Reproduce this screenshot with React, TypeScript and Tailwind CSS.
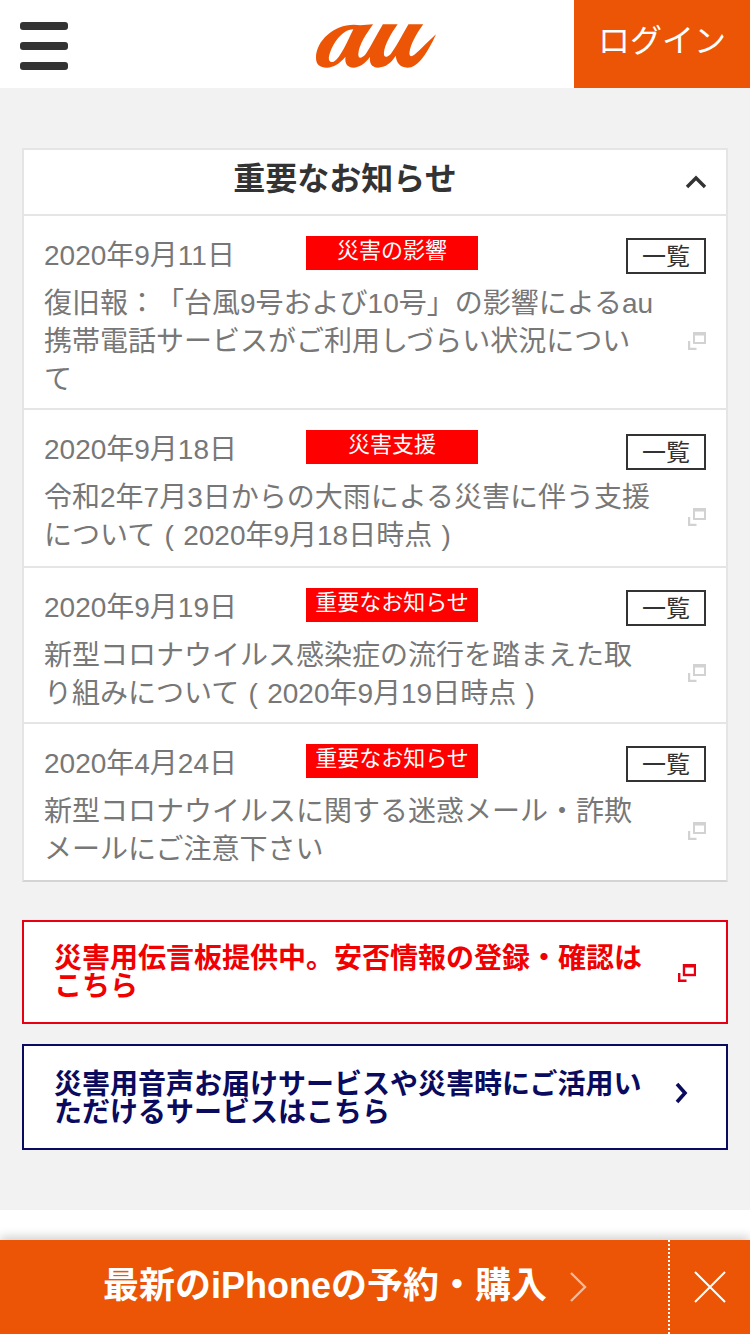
import React from "react";

const FONT = "font-['Liberation_Sans','Noto_Sans_CJK_JP',sans-serif]";

function ExtIcon({ color, weight }: { color: string; weight: number }) {
  return (
    <svg width="18" height="18" viewBox="0 0 18 18" fill="none" className="shrink-0">
      <rect x="6" y="1" width="11" height="10" fill="none" stroke={color} strokeWidth={weight} />
      <rect x="5" y="0" width="13" height="3.5" fill={color} />
      <path d="M1 9v8h7.5" stroke={color} strokeWidth={weight + 0.4} />
    </svg>
  );
}

function Paren({ c }: { c: string }) {
  return <span className="inline-block w-[28px] text-center">{c}</span>;
}

const items = [
  {
    date: "2020年9月11日",
    tag: "災害の影響",
    lines: [<>復旧報：「台風9号および10号」の影響によるau</>, <>携帯電話サービスがご利用しづらい状況につい</>, <>て</>],
    chipMt: "mt-[2px]",
    pb: "pb-[9px]",
    iconMb: "mb-[2px]",
  },
  {
    date: "2020年9月18日",
    tag: "災害支援",
    lines: [
      <>令和2年7月3日からの大雨による災害に伴う支援</>,
      <>
        について<Paren c="(" />2020年9月18日時点<Paren c=")" />
      </>,
    ],
    chipMt: "mt-[4px]",
    pb: "pb-[11px]",
    iconMb: "mb-0",
  },
  {
    date: "2020年9月19日",
    tag: "重要なお知らせ",
    lines: [
      <>新型コロナウイルス感染症の流行を踏まえた取</>,
      <>
        り組みについて<Paren c="(" />2020年9月19日時点<Paren c=")" />
      </>,
    ],
    chipMt: "mt-[2px]",
    pb: "pb-[9px]",
    iconMb: "mb-[4px]",
  },
  {
    date: "2020年4月24日",
    tag: "重要なお知らせ",
    lines: [<>新型コロナウイルスに関する迷惑メール・詐欺</>, <>メールにご注意下さい</>],
    chipMt: "mt-[2px]",
    pb: "pb-[11px]",
    iconMb: "mb-0",
  },
];

export default function App() {
  return (
    <div className={`${FONT} [text-spacing-trim:space-all] w-[750px] h-[1334px] overflow-hidden bg-[#f2f2f2] flex flex-col`}>
      <header className="h-[88px] bg-white flex items-stretch shrink-0">
        <div className="w-[314px] pl-[20px] pt-[22px] flex flex-col gap-[12px]">
          <div className="w-[48px] h-[8px] rounded-[3px] bg-[#333]" />
          <div className="w-[48px] h-[8px] rounded-[3px] bg-[#333]" />
          <div className="w-[48px] h-[8px] rounded-[3px] bg-[#333]" />
        </div>
        <div className="flex-1 pt-[24px]">
          <svg width="120" height="45" viewBox="0 0 122 45" className="ml-[2px]">
            <path
              fillRule="evenodd"
              fill="#eb5505"
              d="M45 1C22 -3 0 15 0 34C0 41 4 44 11 44C18 44 24 40 30 33C29 40 32 44 38 44C44 44 50 40 55 33C54 40 57 44 63 44C70 44 76 40 81 32C82 40 86 44 93 44C103 44 112 32 122 10C115 16 107 25 100 31C97 33 95 33 95 29C96 20 102 10 109 0H94C87 12 81 24 76 30C72 34 69 34 69 29C70 20 76 10 83 0H68C61 12 55 24 50 31C46 35 43 35 43 30C44 20 51 10 58 0ZM38 5C26 5 15 22 13 34C13 38 15 39 18 38C25 34 32 17 38 5Z"
            />
          </svg>
        </div>
        <div className="w-[176px] bg-[#eb5505] text-white text-[32px] leading-[82px] text-center">ログイン</div>
      </header>

      <section className="mt-[60px] mx-[22px] border-2 border-[#e5e5e5] border-b-[#d4d4d4] bg-white shrink-0">
        <div className="h-[64px] relative">
          <div className="w-[642px] text-center text-[32px] font-bold text-[#333] leading-[58px]">重要なお知らせ</div>
          <svg width="24" height="16" viewBox="0 0 24 16" className="absolute right-[18px] top-[24px]" fill="none">
            <path d="M3 13L12 4L21 13" stroke="#333" strokeWidth="3.4" />
          </svg>
        </div>
        {items.map((it, i) => (
          <div key={i} className={`border-t-2 border-[#e5e5e5] pl-[20px] pr-[20px] pt-[20px] ${it.pb}`}>
            <div className="h-[49px] flex items-start">
              <div className="w-[262px] text-[28px] leading-[39px] text-[#777]">{it.date}</div>
              <div className="w-[172px] h-[34px] bg-[#ff0000] text-white text-[22px] leading-[30px] text-center">{it.tag}</div>
              <div className={`ml-auto ${it.chipMt} w-[80px] h-[36px] border-2 border-[#333] text-[#333] bg-white text-[24px] leading-[34px] text-center`}>
                一覧
              </div>
            </div>
            <div className="flex items-center justify-between">
              <div className="text-[28px] leading-[38px] text-[#777] whitespace-nowrap">
                {it.lines.map((l, j) => (
                  <div key={j}>{l}</div>
                ))}
              </div>
              <div className={it.iconMb}>
                <ExtIcon color="#d2d2d2" weight={2} />
              </div>
            </div>
          </div>
        ))}
      </section>

      <div className="mt-[38px] mx-[22px] h-[104px] border-2 border-[#e60012] bg-white pl-[30px] pr-[30px] flex items-center justify-between shrink-0">
        <div className="w-[600px] pt-[2px] text-[28px] leading-[28px] font-bold text-[#f00000]">災害用伝言板提供中。安否情報の登録・確認はこちら</div>
        <div className="pt-[2px]">
          <ExtIcon color="#e60012" weight={2.4} />
        </div>
      </div>

      <div className="mt-[20px] mx-[22px] h-[106px] border-2 border-[#0a0a5e] bg-white pl-[30px] pr-[38px] flex items-center justify-between shrink-0">
        <div className="w-[600px] pt-[4px] text-[28px] leading-[28px] font-bold text-[#0a0a5e]">災害用音声お届けサービスや災害時にご活用いただけるサービスはこちら</div>
        <svg width="14" height="24" viewBox="0 0 14 24" fill="none" className="shrink-0 mb-[8px]">
          <path d="M3 3L11 12L3 21" stroke="#0a0a5e" strokeWidth="3.6" />
        </svg>
      </div>

      <div className="mt-[60px] flex-1 bg-white" />

      <footer className="h-[94px] bg-[#eb5505] flex shrink-0 shadow-[0_-3px_10px_rgba(0,0,0,0.2)] relative">
        <div className="w-[668px] flex items-center pl-[103px] gap-[22px] text-white">
          <span className="text-[36px] font-bold leading-[88px] pb-[2px]">最新のiPhoneの予約・購入</span>
          <svg width="18" height="32" viewBox="0 0 18 32" fill="none">
            <path d="M2 2L16 16L2 30" stroke="#f4b999" strokeWidth="2.4" />
          </svg>
        </div>
        <div className="flex-1 border-l-2 border-dotted border-white flex items-center justify-center">
          <svg width="34" height="34" viewBox="0 0 34 34" fill="none">
            <path d="M2 2L32 32M32 2L2 32" stroke="#fff" strokeWidth="2" />
          </svg>
        </div>
      </footer>
    </div>
  );
}
